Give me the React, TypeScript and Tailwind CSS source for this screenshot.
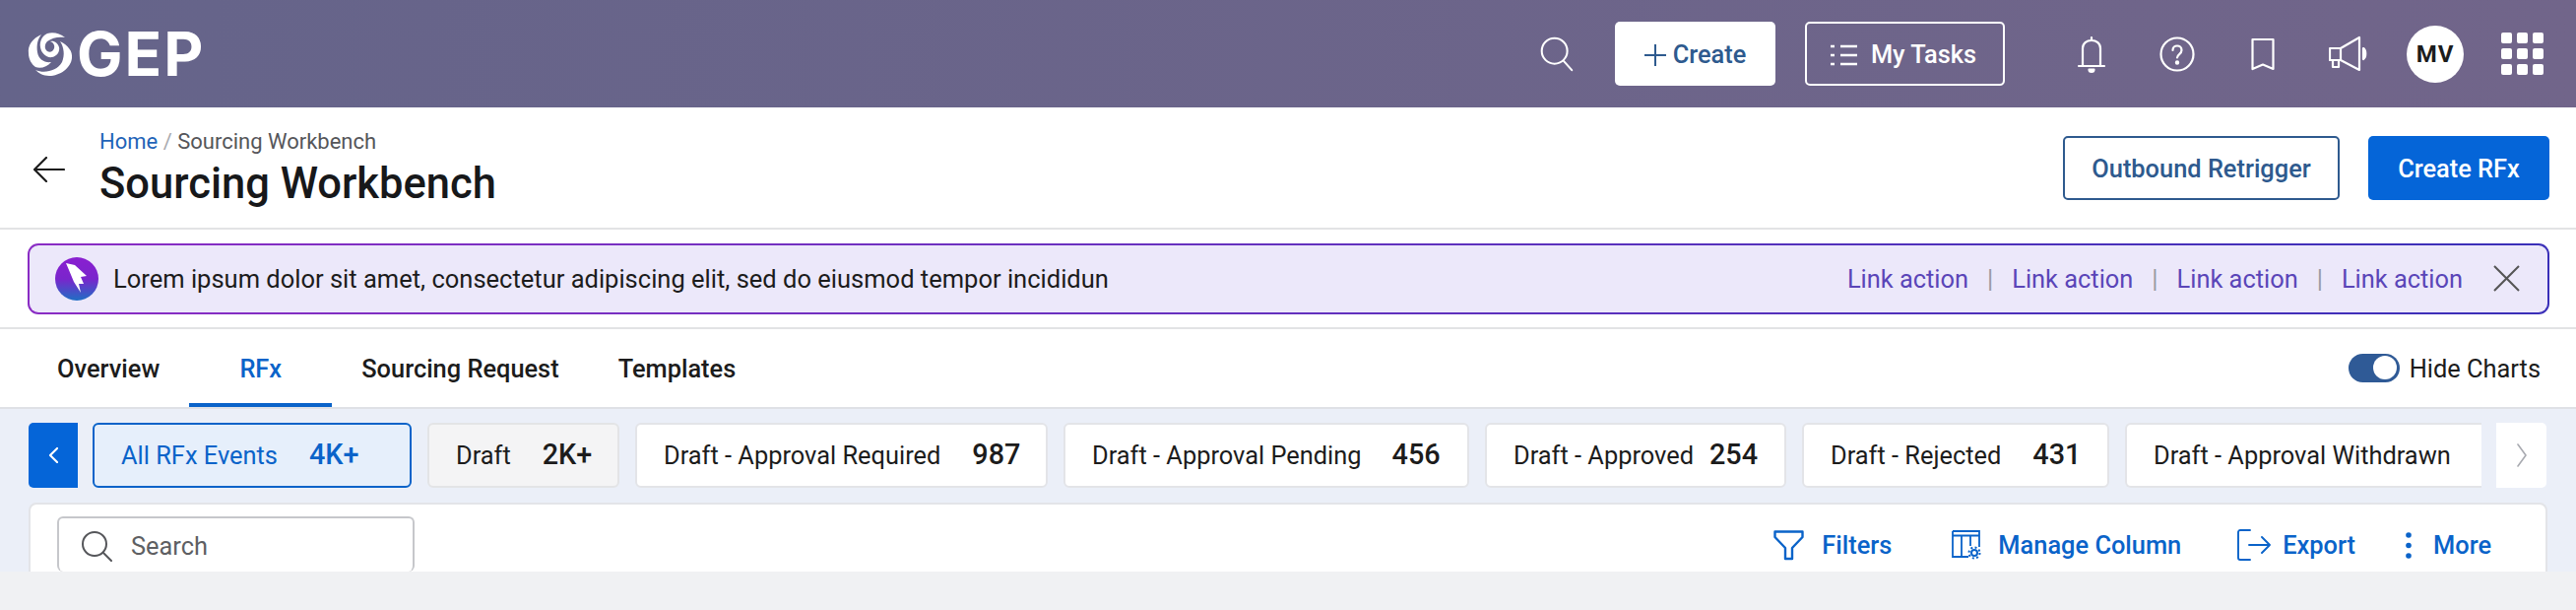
import { ReactNode } from "react";

const chips = [
  { label: "All RFx Events", count: "4K+", width: "w-[324px]", gap: "gap-[32px]", tone: "border-2 border-[#0a63c9] bg-[#e6effb] text-[#0a63c9]" },
  { label: "Draft", count: "2K+", width: "w-[195px]", gap: "gap-[32px]", tone: "border-2 border-[#e3e4e6] bg-[#f4f4f5] text-[#1c1c1c]" },
  { label: "Draft - Approval Required", count: "987", width: "w-[419px]", gap: "gap-[32px]", tone: "border-2 border-[#e3e4e8] bg-white text-[#1c1c1c]" },
  { label: "Draft - Approval Pending", count: "456", width: "w-[412px]", gap: "gap-[31px]", tone: "border-2 border-[#e3e4e8] bg-white text-[#1c1c1c]" },
  { label: "Draft - Approved", count: "254", width: "w-[306px]", gap: "gap-[16px]", tone: "border-2 border-[#e3e4e8] bg-white text-[#1c1c1c]" },
  { label: "Draft - Rejected", count: "431", width: "w-[312px]", gap: "gap-[32px]", tone: "border-2 border-[#e3e4e8] bg-white text-[#1c1c1c]" },
];

function TopIcon({ children, className }: { children: ReactNode; className: string }) {
  return (
    <svg viewBox="0 0 40 40" fill="none" stroke="white" strokeWidth="2.2" strokeLinecap="round" strokeLinejoin="round" className={className}>
      {children}
    </svg>
  );
}

function BlueAction({ icon, label, className }: { icon: ReactNode; label: string; className: string }) {
  return (
    <div className={`flex items-center ${className}`}>
      {icon}
      <span className="text-[25.4px] font-medium text-[#0a63c9]">{label}</span>
    </div>
  );
}

function Swirl() {
  return (
    <svg viewBox="0 0 46 46" fill="white" className="h-[46px] w-[46px]">
      <path d="M14 3C5 7 0 14 1 22C1 28 4 33 8 36C13 38 20 36 24 31C17 32 11 28 10 21C9 14 10 8 14 3Z" />
      <path d="M33 10C41 14 46 20 45 27C44 37 33 45 22 45C16 45 11 42 8 39C17 43 30 40 35 31C38 24 37 16 33 10Z" />
      <path d="M38 6C33 2 26 0 20 2C15 4 12 10 13 16C14 22 19 27 25 26C30 25 33 20 32 16C31 12 27 9 23 10C26 11 28 14 27 17C26 20 23 22 20 20C17 18 17 13 20 10C25 6 32 5 38 6Z" />
    </svg>
  );
}

export default function App() {
  return (
    <div className="h-[619px] w-[2616px] overflow-hidden bg-[#f0f1f3] font-['Roboto',sans-serif]">
      {/* top bar */}
      <header className="flex h-[109px] items-center bg-gradient-to-r from-[#65648a] to-[#71658a] pl-[28px] pr-[33px]">
        <div className="flex items-center">
          <Swirl />
          <span className="ml-[4px] font-['Inter',sans-serif] text-[62px] font-bold leading-none tracking-[2px] text-white">GEP</span>
        </div>

        <TopIcon className="ml-auto h-[37px] w-[37px]">
          <circle cx="18" cy="17" r="14" />
          <path d="M28 28l9 10" />
        </TopIcon>

        <button className="ml-[41px] flex h-[65px] w-[163px] items-center justify-center gap-[7px] rounded-[5px] bg-white pt-[2px] text-[25.4px] font-medium text-[#2e5a8e]">
          <svg viewBox="0 0 22 22" stroke="#2e5a8e" strokeWidth="2" className="h-[22px] w-[22px]"><path d="M11 0v22M0 11h22" /></svg>
          Create
        </button>

        <button className="ml-[30px] flex h-[65px] w-[203px] items-center justify-center gap-[14px] rounded-[5px] border-2 border-white pt-[2px] pr-[3px] text-[25.4px] font-medium text-white">
          <svg viewBox="0 0 27 24" stroke="white" strokeWidth="2.4" className="h-[24px] w-[27px]"><path d="M0 3h4M10 3h17M0 12h4M10 12h17M0 21h4M10 21h17" /></svg>
          My Tasks
        </button>

        <TopIcon className="ml-[68px] h-[40px] w-[40px]">
          <path d="M11 32V14C11 9 15 6 20 6C25 6 29 9 29 14V32M7 32H33M20 3v3" />
          <path d="M17.5 35.5a2.5 2.5 0 0 0 5 0Z" fill="white" />
        </TopIcon>

        <TopIcon className="ml-[47px] h-[40px] w-[40px]">
          <circle cx="20" cy="20" r="16.5" />
          <path d="M15.5 16c0-6 9-6 9 0c0 4-4.5 4-4.5 7.5" />
          <circle cx="20" cy="28.5" r="1.1" fill="white" />
        </TopIcon>

        <TopIcon className="ml-[47px] h-[40px] w-[40px]">
          <path d="M9.5 5H30.5V35L20 30.5L9.5 35Z" />
        </TopIcon>

        <TopIcon className="ml-[47px] h-[40px] w-[40px]">
          <path d="M1 14H12V26H1ZM12 14L31 3V36L12 26M4 26V33H10V26" />
          <path d="M35 14c3 2 3 9 0 11Z" fill="white" />
        </TopIcon>

        <div className="ml-[39px] flex h-[58px] w-[58px] items-center justify-center rounded-full bg-white text-[24px] font-bold tracking-[1px] text-[#1c1c1c]">MV</div>

        <div className="ml-[38px] grid grid-cols-3 gap-[5px]">
          {Array.from({ length: 9 }).map((_, i) => (
            <span key={i} className="h-[11px] w-[11px] rounded-[2px] bg-white" />
          ))}
        </div>
      </header>

      {/* page heading */}
      <section className="flex h-[124px] items-center border-b-2 border-[#e2e3e5] bg-white pl-[34px] pr-[27px]">
        <svg viewBox="0 0 32 26" fill="none" stroke="#1c1c1c" strokeWidth="2.2" strokeLinecap="round" strokeLinejoin="round" className="mt-[3px] h-[26px] w-[32px]">
          <path d="M31 13H1M13 1L1 13L13 25" />
        </svg>
        <div className="ml-[35px]">
          <div className="text-[22px] leading-[30px] text-[#55565a]">
            <span className="text-[#1f64b8]">Home</span>
            <span className="text-[#a9abb0]"> / </span>
            Sourcing Workbench
          </div>
          <h1 className="-mb-[2px] mt-[2px] text-[43.5px] font-medium leading-[52px] text-[#17181a]">Sourcing Workbench</h1>
        </div>
        <button className="ml-auto h-[65px] w-[281px] rounded-[5px] border-2 border-[#2e5a8e] pt-[2px] text-[25.4px] font-medium text-[#2e5a8e]">Outbound Retrigger</button>
        <button className="ml-[29px] h-[65px] w-[184px] rounded-[5px] bg-[#0565d8] pt-[2px] text-[25.4px] font-medium text-white">Create RFx</button>
      </section>

      {/* notice */}
      <section className="flex h-[101px] items-center border-b-2 border-[#e2e3e5] bg-white pl-[28px] pr-[27px]">
        <div className="h-[72px] w-full rounded-[11px] bg-gradient-to-r from-[#8a2cc4] to-[#3a2fb8] p-[2px]">
          <div className="flex h-full items-center rounded-[9px] bg-[#ece8fa] pl-[26px] pr-[28px]">
            <svg viewBox="0 0 44 44" className="h-[44px] w-[44px] shrink-0">
              <defs>
                <linearGradient id="feather" x1="0" y1="0" x2="0" y2="1">
                  <stop offset="0" stopColor="#8a1fd0" />
                  <stop offset="0.5" stopColor="#7a25cc" />
                  <stop offset="1" stopColor="#1f6fc4" />
                </linearGradient>
              </defs>
              <circle cx="22" cy="22" r="22" fill="url(#feather)" />
              <path d="M11 6L20 8L32 19L26 20L29 27L24 27L26 36L19 25L14 13Z" fill="white" />
            </svg>
            <span className="ml-[15px] pt-[2px] text-[25.5px] text-[#1c1c1c]">Lorem ipsum dolor sit amet, consectetur adipiscing elit, sed do eiusmod tempor incididun</span>
            <div className="ml-auto flex items-center pt-[2px] text-[25.4px] text-[#5a45b8]">
              <span>Link action</span>
              <span className="mx-[19px] text-[#999aa3]">|</span>
              <span>Link action</span>
              <span className="mx-[19px] text-[#999aa3]">|</span>
              <span>Link action</span>
              <span className="mx-[19px] text-[#999aa3]">|</span>
              <span>Link action</span>
            </div>
            <svg viewBox="0 0 27 27" stroke="#555" strokeWidth="2" className="ml-[31px] h-[27px] w-[27px]"><path d="M1 1l25 25M26 1L1 26" /></svg>
          </div>
        </div>
      </section>

      {/* tabs */}
      <nav className="flex h-[81px] items-center border-b-2 border-[#dfe1e6] bg-white pl-[58px] pr-[36px] text-[25.4px] font-medium text-[#1c1c1c]">
        <span className="pt-[2px]">Overview</span>
        <span className="ml-[30px] flex h-full w-[145px] items-center justify-center border-b-[4px] border-[#0a63c9] pt-[6px] text-[#0a63c9]">RFx</span>
        <span className="ml-[30px] pt-[2px]">Sourcing Request</span>
        <span className="ml-[60px] pt-[2px]">Templates</span>
        <div className="ml-auto flex items-center">
          <span className="flex h-[29px] w-[52px] items-center justify-end rounded-full bg-[#2f5a96] pr-[3px]">
            <span className="h-[24px] w-[24px] rounded-full bg-white" />
          </span>
          <span className="ml-[10px] pt-[2px] font-normal">Hide Charts</span>
        </div>
      </nav>

      {/* status chips + toolbar */}
      <section className="h-[165px] bg-[#ebeff8] px-[29px] pt-[14px]">
        <div className="flex h-[66px] items-stretch">
          <button className="flex w-[50px] items-center justify-center rounded-l-[5px] bg-[#0565d8]">
            <svg viewBox="0 0 10 18" fill="none" stroke="white" strokeWidth="2.4" strokeLinecap="round" strokeLinejoin="round" className="h-[16px] w-[9px]"><path d="M9 1L1 9L9 17" /></svg>
          </button>
          <div className="ml-[15px] flex gap-[16px]">
            {chips.map((chip) => (
              <div key={chip.label} className={`flex items-center rounded-[6px] pl-[27px] ${chip.gap} ${chip.width} ${chip.tone}`}>
                <span className="text-[25.4px]">{chip.label}</span>
                <span className="text-[28.8px] font-medium">{chip.count}</span>
              </div>
            ))}
            <div className="flex w-[362px] items-center rounded-l-[6px] border-y-2 border-l-2 border-[#e3e4e8] bg-white pl-[27px] text-[25.4px] text-[#1c1c1c]">Draft - Approval Withdrawn</div>
          </div>
          <div className="ml-[15px] flex w-[51px] items-center justify-center rounded-r-[5px] bg-white">
            <svg viewBox="0 0 10 24" fill="none" stroke="#a8aab0" strokeWidth="1.6" strokeLinecap="round" strokeLinejoin="round" className="h-[24px] w-[10px]"><path d="M1 1L9 12L1 23" /></svg>
          </div>
        </div>

        <div className="mt-[15px] flex h-[70px] items-start rounded-t-[8px] border-x-2 border-t-2 border-[#e3e4e8] bg-white pl-[27px] pt-[12px]">
          <div className="flex h-[56px] w-[363px] items-center rounded-[6px] border-x-2 border-t-2 border-[#c6c7cb] pl-[22px] pt-[2px]">
            <svg viewBox="0 0 32 32" fill="none" stroke="#55565a" strokeWidth="2" strokeLinecap="round" className="h-[32px] w-[32px]">
              <circle cx="14" cy="14" r="12" />
              <path d="M23 23l8 8" />
            </svg>
            <span className="ml-[19px] text-[25.4px] text-[#5e5f63]">Search</span>
          </div>

          <BlueAction
            className="ml-auto mt-[12px] h-[34px]"
            label="Filters"
            icon={
              <svg viewBox="0 0 31 31" fill="none" stroke="#0a63c9" strokeWidth="2.4" strokeLinejoin="round" className="mr-[18px] h-[31px] w-[31px]">
                <path d="M1.5 1.5H29.5V7L19 18V29H12V18L1.5 7Z" />
              </svg>
            }
          />
          <BlueAction
            className="ml-[61px] mt-[12px] h-[34px]"
            label="Manage Column"
            icon={
              <svg viewBox="0 0 30 30" fill="none" stroke="#0a63c9" strokeWidth="1.8" className="mr-[17px] h-[30px] w-[30px]">
                <path d="M1 1H28V17M1 1V27H17M1 5.5H28M10 5.5V27M19 5.5V16" />
                <circle cx="23" cy="23" r="6.5" fill="white" stroke="none" />
                <circle cx="23" cy="23" r="3" strokeWidth="2" />
                <circle cx="23" cy="23" r="5.5" strokeWidth="2" strokeDasharray="2 2.3" />
              </svg>
            }
          />
          <BlueAction
            className="ml-[57px] mt-[12px] h-[34px]"
            label="Export"
            icon={
              <svg viewBox="0 0 34 32" fill="none" stroke="#0a63c9" strokeWidth="1.9" strokeLinecap="round" strokeLinejoin="round" className="mr-[12px] h-[32px] w-[34px]">
                <path d="M13 1H3A2 2 0 0 0 1 3V29A2 2 0 0 0 3 31H13M12 16H33M25 8L33 16L25 24" />
              </svg>
            }
          />
          <BlueAction
            className="ml-[51px] mt-[12px] h-[34px]"
            label="More"
            icon={
              <svg viewBox="0 0 6 27" fill="#0a63c9" className="mr-[22px] h-[27px] w-[6px]">
                <circle cx="3" cy="3" r="2.8" />
                <circle cx="3" cy="13.5" r="2.8" />
                <circle cx="3" cy="24" r="2.8" />
              </svg>
            }
          />
          <span className="w-[55px]" />
        </div>
      </section>
    </div>
  );
}
